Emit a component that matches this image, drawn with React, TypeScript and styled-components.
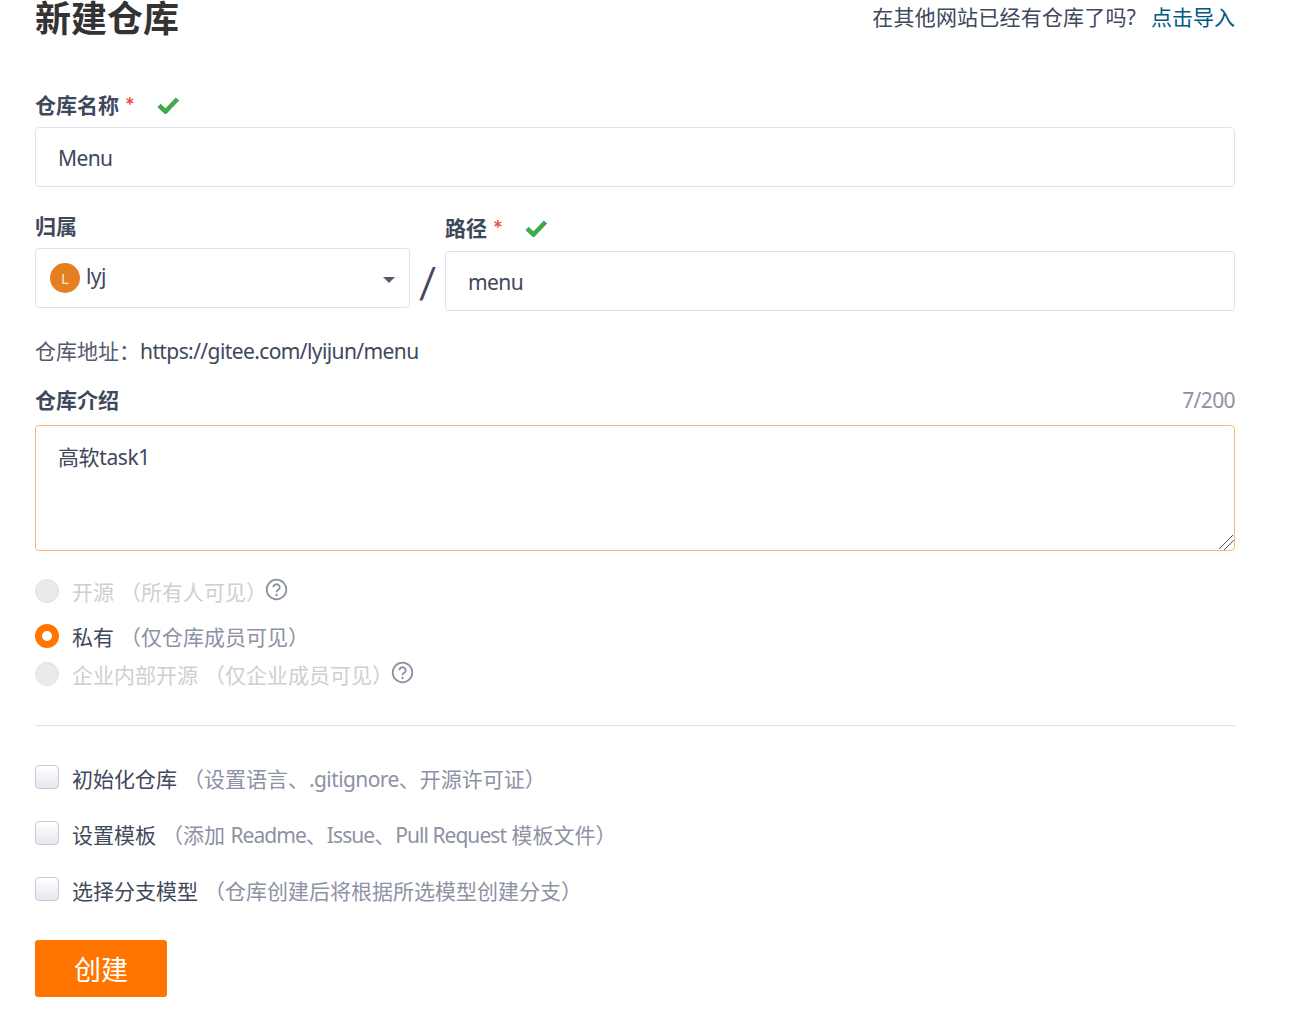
import React from 'react';
import styled, { createGlobalStyle } from 'styled-components';

const FONT = `"Noto Sans", "Noto Sans CJK SC", sans-serif`;

const Global = createGlobalStyle`
  html, body { margin: 0; padding: 0; background: #fff; }
  body { font-family: ${FONT}; font-size: 21px; color: #40485b; overflow: hidden; }
  * { box-sizing: border-box; }
`;

const Page = styled.div`
  width: 1299px;
  height: 1026px;
  padding: 0 64px 0 35px;
  display: flex;
  flex-direction: column;
`;
const Header = styled.header`
  display: flex;
  justify-content: space-between;
  align-items: center;
  height: 36px;
  margin-bottom: 54px;
`;
const Title = styled.h1`
  margin: 2px 0 0;
  font-size: 36px;
  line-height: 36px;
  font-weight: 700;
  color: #333;
`;
const ImportHint = styled.div`
  font-size: 21px;
  line-height: 36px;
  margin-bottom: 2px;
  color: #40485b;
  letter-spacing: 0.2px;
`;
const ImportLink = styled.a`
  color: #005980;
  margin-left: 15px;
  letter-spacing: 0;
`;
const Latin = styled.span<{ $tight?: boolean }>`
  letter-spacing: ${p => (p.$tight ? '-0.95px' : '-0.6px')};
`;
const Label = styled.label`
  display: flex;
  align-items: center;
  height: 31px;
  font-size: 21px;
  line-height: 31px;
  font-weight: 700;
  color: #40485b;
`;
const Star = styled.span`
  font-family: Lato, sans-serif;
  font-size: 23px;
  color: #ee4a45;
  font-weight: 700;
  margin-left: 6px;
`;
const Check = styled.svg`
  width: 23px;
  height: 18px;
  margin-left: 22px;
  flex: none;
`;
const TextInput = styled.input`
  display: block;
  width: 100%;
  height: 60px;
  padding: 2px 22px 0;
  border: 1px solid #dfe3e9;
  border-radius: 4px;
  outline: none;
  font-family: ${FONT};
  font-size: 21px;
  letter-spacing: -0.6px;
  color: #40485b;
  background: #fff;
`;
const NameField = styled.div`
  margin-bottom: 27px;
`;
const NameLabel = styled(Label)`
  margin-bottom: 6px;
  ${Check} { margin-bottom: 2px; }
`;
const OwnerRow = styled.div`
  display: flex;
  align-items: flex-start;
`;
const OwnerCol = styled.div`
  width: 375px;
  flex: none;
`;
const PathCol = styled.div`
  flex: 1;
  margin-top: 3px;
`;
const OwnerLabel = styled(Label)<{ $pad: number }>`
  height: 34px;
  padding-bottom: ${p => p.$pad}px;
`;
const Select = styled.div`
  display: flex;
  align-items: center;
  height: 60px;
  padding: 0 14px;
  border: 1px solid #dfe3e9;
  border-radius: 4px;
`;
const Avatar = styled.span`
  width: 30px;
  height: 30px;
  border-radius: 50%;
  background: #e67e22;
  color: #fbe3cc;
  font-size: 15px;
  line-height: 30px;
  text-align: center;
  flex: none;
`;
const OwnerName = styled.span`
  margin-left: 6px;
  flex: 1;
  line-height: 26px;
  letter-spacing: -0.6px;
  position: relative;
  top: -2px;
`;
const Caret = styled.span`
  width: 0;
  height: 0;
  margin-top: 4px;
  border-left: 6px solid transparent;
  border-right: 6px solid transparent;
  border-top: 6px solid #545b6c;
`;
const Slash = styled.div`
  width: 35px;
  height: 56px;
  flex: none;
  text-align: center;
  font-family: Lato, sans-serif;
  font-size: 42px;
  line-height: 60px;
  margin-top: 38px;
  color: #40485b;
`;
const Address = styled.div`
  margin-top: 24px;
  height: 32px;
  line-height: 32px;
  color: #40485b;
`;
const AddressKey = styled.span`
  color: #545b6c;
`;
const DescHead = styled.div`
  display: flex;
  justify-content: space-between;
  align-items: center;
  margin-top: 17px;
  height: 32px;
`;
const Counter = styled.span`
  color: #8c92a4;
  font-size: 21px;
  letter-spacing: -0.6px;
`;
const TextArea = styled.textarea`
  display: block;
  width: 100%;
  height: 126px;
  margin-top: 9px;
  padding: 16px 22px;
  border: 1px solid #fbb676;
  border-radius: 4px;
  outline: none;
  font-family: ${FONT};
  font-size: 21px;
  line-height: 31px;
  letter-spacing: -0.4px;
  color: #40485b;
  &::-webkit-resizer {
    background: linear-gradient(
      135deg,
      transparent 0 44%,
      #555 44% 48.5%,
      transparent 48.5% 64%,
      #555 64% 68.5%,
      transparent 68.5%
    );
  }
`;
const Radios = styled.div`
  margin-top: 22px;
  display: flex;
  flex-direction: column;
`;
const RadioRow = styled.div<{ $h: number }>`
  display: flex;
  align-items: center;
  height: ${p => p.$h}px;
`;
const RadioDot = styled.span<{ $on?: boolean }>`
  width: 24px;
  height: 24px;
  border-radius: 50%;
  flex: none;
  margin-right: 13px;
  background: ${p => (p.$on ? '#fff' : '#eaeaea')};
  border: ${p => (p.$on ? '7px solid #ff7500' : '1px solid #e0e0e0')};
`;
const RadioName = styled.span<{ $off?: boolean }>`
  color: ${p => (p.$off ? '#cfcfcf' : '#40485b')};
`;
const Hint = styled.span<{ $off?: boolean }>`
  color: ${p => (p.$off ? '#cfcfcf' : '#8c92a4')};
  margin-left: 6px;
`;
const Help = styled.svg`
  width: 23px;
  height: 23px;
  flex: none;
  margin-left: -2px;
  position: relative;
  top: -2px;
`;
const Divider = styled.hr`
  width: 100%;
  height: 1px;
  border: 0;
  margin: 40px 0 37px;
  background: #dfe3e9;
`;
const CheckRows = styled.div`
  display: flex;
  flex-direction: column;
  gap: 24px;
`;
const CheckRow = styled.div`
  display: flex;
  align-items: center;
  height: 32px;
  padding-bottom: 2px;
`;
const CheckBox = styled.span`
  width: 24px;
  height: 24px;
  border: 1px solid #c8ccd4;
  border-radius: 4px;
  background: linear-gradient(#fff, #e4e7ef);
  margin-right: 13px;
  flex: none;
  position: relative;
  top: -1px;
`;
const Submit = styled.button`
  width: 132px;
  height: 57px;
  margin-top: 33px;
  border: 0;
  border-radius: 3px;
  background: #ff7500;
  color: #fff;
  font-family: ${FONT};
  font-size: 27px;
  padding: 0;
`;

const GreenCheck = () => (
  <Check viewBox="0 0 23 18">
    <path d="M2 9.5l6.5 6L20.5 3" fill="none" stroke="#40a94b" strokeWidth="4.6" />
  </Check>
);
const HelpIcon = () => (
  <Help viewBox="0 0 23 23">
    <circle cx="11.5" cy="11.5" r="9.8" fill="none" stroke="#8c92a4" strokeWidth="1.8" />
    <path d="M8.3 9.2a3.2 3 0 1 1 4.9 2.6c-1.1.7-1.7 1.3-1.7 2.5" fill="none" stroke="#8c92a4" strokeWidth="1.9" />
    <circle cx="11.5" cy="17" r="1.2" fill="#8c92a4" />
  </Help>
);

export default function App() {
  return (
    <Page>
      <Global />
      <Header>
        <Title>新建仓库</Title>
        <ImportHint>
          在其他网站已经有仓库了吗?
          <ImportLink>点击导入</ImportLink>
        </ImportHint>
      </Header>
      <NameField>
        <NameLabel>
          仓库名称<Star>*</Star>
          <GreenCheck />
        </NameLabel>
        <TextInput readOnly value="Menu" />
      </NameField>
      <OwnerRow>
        <OwnerCol>
          <OwnerLabel $pad={10}>归属</OwnerLabel>
          <Select>
            <Avatar>L</Avatar>
            <OwnerName>lyj</OwnerName>
            <Caret />
          </Select>
        </OwnerCol>
        <Slash>/</Slash>
        <PathCol>
          <OwnerLabel $pad={12}>
            路径<Star>*</Star>
            <GreenCheck />
          </OwnerLabel>
          <TextInput readOnly value="menu" />
        </PathCol>
      </OwnerRow>
      <Address>
        <AddressKey>仓库地址：</AddressKey>
        <Latin>https://gitee.com/lyijun/menu</Latin>
      </Address>
      <DescHead>
        <Label>仓库介绍</Label>
        <Counter>7/200</Counter>
      </DescHead>
      <TextArea readOnly value="高软task1" />
      <Radios>
        <RadioRow $h={36}>
          <RadioDot />
          <RadioName $off>开源</RadioName>
          <Hint $off>（所有人可见）</Hint>
          <HelpIcon />
        </RadioRow>
        <RadioRow $h={54}>
          <RadioDot $on />
          <RadioName>私有</RadioName>
          <Hint>（仅仓库成员可见）</Hint>
        </RadioRow>
        <RadioRow $h={22}>
          <RadioDot />
          <RadioName $off>企业内部开源</RadioName>
          <Hint $off>（仅企业成员可见）</Hint>
          <HelpIcon />
        </RadioRow>
      </Radios>
      <Divider />
      <CheckRows>
        <CheckRow>
          <CheckBox />
          初始化仓库<Hint>（设置语言、<Latin>.gitignore</Latin>、开源许可证）</Hint>
        </CheckRow>
        <CheckRow>
          <CheckBox />
          设置模板<Hint>（添加 <Latin $tight>Readme</Latin>、<Latin $tight>Issue</Latin>、<Latin $tight>Pull Request</Latin> 模板文件）</Hint>
        </CheckRow>
        <CheckRow>
          <CheckBox />
          选择分支模型<Hint>（仓库创建后将根据所选模型创建分支）</Hint>
        </CheckRow>
      </CheckRows>
      <Submit>创建</Submit>
    </Page>
  );
}
